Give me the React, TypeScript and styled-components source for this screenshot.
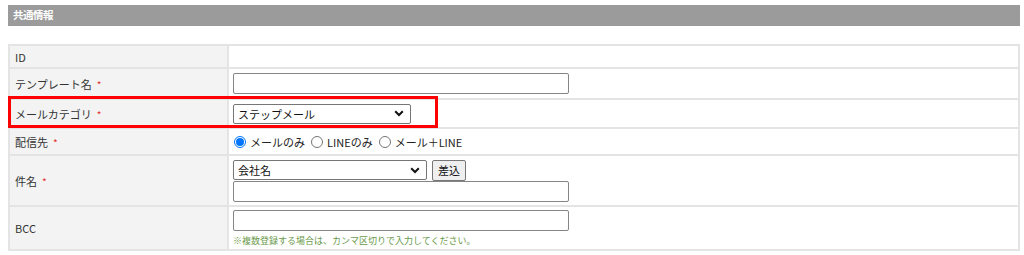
import React from "react";
import styled, { createGlobalStyle } from "styled-components";

const Global = createGlobalStyle`
  html, body { margin: 0; padding: 0; background: #fff; }
  body { font-family: "Noto Sans CJK JP", "Noto Sans", sans-serif; color: #333; }
`;

const Page = styled.div`
  padding: 5px 4px 0 8px;
`;

const SectionBar = styled.div`
  height: 21px;
  background: #9b9b9b;
  color: #fff;
  font-weight: bold;
  font-size: 10.5px;
  line-height: 19px;
  padding-left: 5px;
  letter-spacing: -0.5px;
`;

const TableWrap = styled.div`
  position: relative;
  margin-top: 18px;
  width: 1012px;
`;

const Table = styled.table`
  width: 100%;
  border-collapse: collapse;
  border: 2px solid #e4e4e4;
  font-size: 11px;
`;

const Row = styled.tr<{ $h: number }>`
  height: ${(p) => p.$h}px;
`;

const Label = styled.th`
  width: 212px;
  background: #f2f3f2;
  border: 2px solid #e4e4e4;
  text-align: left;
  font-weight: normal;
  padding: 0 0 0 5px;
  color: #333;
  vertical-align: middle;
`;

const Req = styled.span`
  color: #e53030;
  margin-left: 5px;
  font-size: 10px;
`;

const Cell = styled.td`
  border: 2px solid #e4e4e4;
  padding: 0 0 0 4px;
  vertical-align: middle;
`;

const TextInput = styled.input<{ $w?: number }>`
  display: block;
  box-sizing: border-box;
  width: ${(p) => p.$w ?? 336}px;
  height: 21px;
  border: 1px solid #858585;
  border-radius: 2px;
  background: #fff;
  margin: 0;
`;

const Select = styled.div<{ $w: number }>`
  box-sizing: border-box;
  width: ${(p) => p.$w}px;
  height: 20px;
  border: 1px solid #767676;
  border-radius: 2px;
  background: #fff;
  display: flex;
  align-items: center;
  justify-content: space-between;
  padding: 0 6px 0 4px;
  font-size: 11px;
  color: #111;
`;

const Chevron = () => (
  <svg width="10" height="7" viewBox="0 0 10 7">
    <path d="M1.2 1.3 L5 5 L8.8 1.3" fill="none" stroke="#111" strokeWidth="2" />
  </svg>
);

const Line = styled.div`
  display: flex;
  align-items: center;
  gap: 5px;
`;

const Btn = styled.div`
  box-sizing: border-box;
  height: 21px;
  padding: 0 5px;
  border: 1px solid #767676;
  border-radius: 2px;
  background: #efefef;
  font-size: 11px;
  display: flex;
  align-items: center;
  color: #111;
`;

const Radios = styled.div`
  display: flex;
  align-items: center;
  font-size: 11px;
  color: #222;
`;

const RadioItem = styled.label`
  display: flex;
  align-items: center;
  margin-right: 5px;
`;

const RadioDot = styled.span<{ $on?: boolean }>`
  box-sizing: border-box;
  width: 12px;
  height: 12px;
  border-radius: 50%;
  border: 1px solid ${(p) => (p.$on ? "#0075ff" : "#767676")};
  margin: 0 4px 0 1px;
  display: inline-flex;
  align-items: center;
  justify-content: center;
  &::after {
    content: "";
    width: 8px;
    height: 8px;
    border-radius: 50%;
    background: ${(p) => (p.$on ? "#0075ff" : "transparent")};
  }
`;

const Note = styled.div`
  font-size: 9px;
  color: #6a9a4a;
  margin-top: 3px;
`;

const Highlight = styled.div`
  position: absolute;
  left: 0;
  top: 52px;
  width: 430px;
  height: 32px;
  box-sizing: border-box;
  border: 3px solid #f00;
  pointer-events: none;
`;

export default function App() {
  return (
    <>
      <Global />
      <Page>
        <SectionBar>共通情報</SectionBar>
        <TableWrap>
          <Table>
            <tbody>
              <Row $h={23}>
                <Label>ID</Label>
                <Cell />
              </Row>
              <Row $h={31}>
                <Label>
                  テンプレート名<Req>*</Req>
                </Label>
                <Cell>
                  <TextInput />
                </Cell>
              </Row>
              <Row $h={29}>
                <Label>
                  メールカテゴリ<Req>*</Req>
                </Label>
                <Cell>
                  <Select $w={178}>
                    <span>ステップメール</span>
                    <Chevron />
                  </Select>
                </Cell>
              </Row>
              <Row $h={27}>
                <Label>
                  配信先<Req>*</Req>
                </Label>
                <Cell>
                  <Radios>
                    <RadioItem>
                      <RadioDot $on />
                      メールのみ
                    </RadioItem>
                    <RadioItem>
                      <RadioDot />
                      LINEのみ
                    </RadioItem>
                    <RadioItem>
                      <RadioDot />
                      メール＋LINE
                    </RadioItem>
                  </Radios>
                </Cell>
              </Row>
              <Row $h={51}>
                <Label>
                  件名<Req>*</Req>
                </Label>
                <Cell>
                  <Line>
                    <Select $w={194}>
                      <span>会社名</span>
                      <Chevron />
                    </Select>
                    <Btn>差込</Btn>
                  </Line>
                  <TextInput />
                </Cell>
              </Row>
              <Row $h={44}>
                <Label>BCC</Label>
                <Cell>
                  <TextInput />
                  <Note>※複数登録する場合は、カンマ区切りで入力してください。</Note>
                </Cell>
              </Row>
            </tbody>
          </Table>
          <Highlight />
        </TableWrap>
      </Page>
    </>
  );
}
